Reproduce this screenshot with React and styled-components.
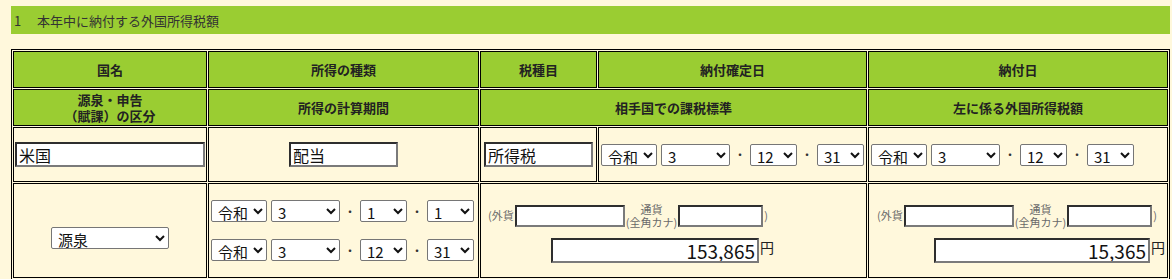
import styled, { createGlobalStyle } from 'styled-components';

const GlobalStyle = createGlobalStyle`
  body {
    margin: 0;
    background: #fff8dc;
    font-family: "Noto Sans CJK JP", "Noto Sans", sans-serif;
    color: #222;
  }
`;

const Page = styled.div`
  width: 1159px;
  padding: 6px 0 0 11px;
`;

const Banner = styled.div`
  height: 28px;
  background: #9acd32;
  display: flex;
  align-items: center;
  padding-left: 3px;
  font-size: 13px;
  color: #333;
  margin-bottom: 15px;
`;

const BannerNo = styled.span`
  width: 23px;
`;

const FormTable = styled.table`
  width: 1159px;
  table-layout: fixed;
  border: 1px solid #000;
  border-spacing: 1px;
  border-collapse: separate;
`;

const HeadCell = styled.th`
  box-sizing: border-box;
  height: 37px;
  border: 1px solid #000;
  background: #9acd32;
  font-size: 13px;
  font-weight: bold;
  color: #222;
  line-height: 16px;
  padding: 1px;
  text-align: center;
`;

const Cell = styled.td`
  box-sizing: border-box;
  height: ${p => p.$h}px;
  border: 1px solid #000;
  padding: 1px;
  text-align: ${p => p.$align || 'left'};
  vertical-align: middle;
  font-size: 12px;
  padding-top: ${p => p.$pt || 1}px;
`;

const TextBox = styled.input`
  box-sizing: border-box;
  width: ${p => p.$w}px;
  height: ${p => p.$h || 25}px;
  border: 2px solid;
  border-color: #2e2e2e #7a7a7a #7a7a7a #2e2e2e;
  background: #fff;
  font-family: "Noto Sans CJK JP", sans-serif;
  font-size: ${p => p.$size || 16}px;
  text-align: ${p => p.$align || 'left'};
  padding: 0 2px;
  color: #111;
  margin: 0;
  vertical-align: middle;
`;

const Picker = styled.select`
  box-sizing: border-box;
  width: ${p => p.$w}px;
  height: 22px;
  border: 1px solid #767676;
  border-radius: 2px;
  background: #fff;
  font-family: "Noto Sans CJK JP", sans-serif;
  font-size: 15px;
  color: #111;
  padding: 0 0 0 2px;
  margin: 0;
`;

const DateStack = styled.div`
  display: flex;
  flex-direction: column;
  gap: 17px;
`;

const DateRow = styled.div`
  display: flex;
  align-items: center;
  gap: 4px;
  margin-left: 1px;
`;

const Dot = styled.span`
  width: 12px;
  text-align: center;
  font-size: 12px;
  color: #333;
`;

const CurrencyBlock = styled.div`
  display: flex;
  flex-direction: column;
  gap: 9px;
  padding-left: ${p => p.$pad}px;
  padding-top: 4px;
`;

const CurrencyLine = styled.div`
  display: flex;
  align-items: center;
`;

const SmallLabel = styled.span`
  font-size: 11px;
  color: #6a6a6a;
  line-height: 13px;
  text-align: center;
  padding: 0 1px;
  white-space: nowrap;
`;

const AmountLine = styled.div`
  display: flex;
  align-items: center;
  margin-left: ${p => p.$indent}px;
`;

const Yen = styled.span`
  font-size: 14px;
  color: #222;
  padding-left: 1px;
  margin-top: -6px;
`;

function DateSelect({ era, year, month, day }) {
  return (
    <DateRow>
      <Picker $w={56} defaultValue={era}>
        <option>平成</option>
        <option>令和</option>
      </Picker>
      <Picker $w={69} defaultValue={year}>
        {[1, 2, 3, 4, 5].map(v => <option key={v}>{v}</option>)}
      </Picker>
      <Dot>・</Dot>
      <Picker $w={47} defaultValue={month}>
        {Array.from({ length: 12 }, (_, i) => <option key={i}>{i + 1}</option>)}
      </Picker>
      <Dot>・</Dot>
      <Picker $w={47} defaultValue={day}>
        {Array.from({ length: 31 }, (_, i) => <option key={i}>{i + 1}</option>)}
      </Picker>
    </DateRow>
  );
}

function Currency({ amount, amountWidth, indent, pad }) {
  return (
    <CurrencyBlock $pad={pad}>
      <CurrencyLine>
        <SmallLabel>(外貨</SmallLabel>
        <TextBox $w={110} $h={22} />
        <SmallLabel>通貨<br />(全角カナ)</SmallLabel>
        <TextBox $w={85} $h={22} />
        <SmallLabel>)</SmallLabel>
      </CurrencyLine>
      <AmountLine $indent={indent}>
        <TextBox $w={amountWidth} $h={25} $size={19} $align="right" defaultValue={amount} />
        <Yen>円</Yen>
      </AmountLine>
    </CurrencyBlock>
  );
}

function App() {
  return (
    <Page>
      <GlobalStyle />
      <Banner>
        <BannerNo>1</BannerNo>
        本年中に納付する外国所得税額
      </Banner>
      <FormTable>
        <colgroup>
          <col style={{ width: 194 }} />
          <col style={{ width: 271 }} />
          <col style={{ width: 117 }} />
          <col style={{ width: 269 }} />
          <col style={{ width: 300 }} />
        </colgroup>
        <tbody>
          <tr>
            <HeadCell>国名</HeadCell>
            <HeadCell>所得の種類</HeadCell>
            <HeadCell>税種目</HeadCell>
            <HeadCell>納付確定日</HeadCell>
            <HeadCell>納付日</HeadCell>
          </tr>
          <tr>
            <HeadCell>源泉・申告<br />（賦課）の区分</HeadCell>
            <HeadCell>所得の計算期間</HeadCell>
            <HeadCell colSpan={2}>相手国での課税標準</HeadCell>
            <HeadCell>左に係る外国所得税額</HeadCell>
          </tr>
          <tr>
            <Cell $h={55} $align="center">
              <TextBox $w={190} defaultValue="米国" />
            </Cell>
            <Cell $h={55} $align="center">
              <TextBox $w={109} defaultValue="配当" />
            </Cell>
            <Cell $h={55} $align="center">
              <TextBox $w={109} defaultValue="所得税" />
            </Cell>
            <Cell $h={55}>
              <DateSelect era="令和" year="3" month="12" day="31" />
            </Cell>
            <Cell $h={55}>
              <DateSelect era="令和" year="3" month="12" day="31" />
            </Cell>
          </tr>
          <tr>
            <Cell $h={95} $align="center" $pt={15}>
              <Picker $w={118} defaultValue="源泉">
                <option>源泉</option>
                <option>申告</option>
                <option>賦課</option>
              </Picker>
            </Cell>
            <Cell $h={95}>
              <DateStack>
                <DateSelect era="令和" year="3" month="1" day="1" />
                <DateSelect era="令和" year="3" month="12" day="31" />
              </DateStack>
            </Cell>
            <Cell $h={95} colSpan={2}>
              <Currency amount="153,865" amountWidth={208} indent={64} pad={5} />
            </Cell>
            <Cell $h={95}>
              <Currency amount="15,365" amountWidth={216} indent={58} pad={6} />
            </Cell>
          </tr>
          <tr>
            <Cell $h={55}></Cell>
            <Cell $h={55}></Cell>
            <Cell $h={55}></Cell>
            <Cell $h={55}></Cell>
            <Cell $h={55}></Cell>
          </tr>
        </tbody>
      </FormTable>
    </Page>
  );
}

export default App;
